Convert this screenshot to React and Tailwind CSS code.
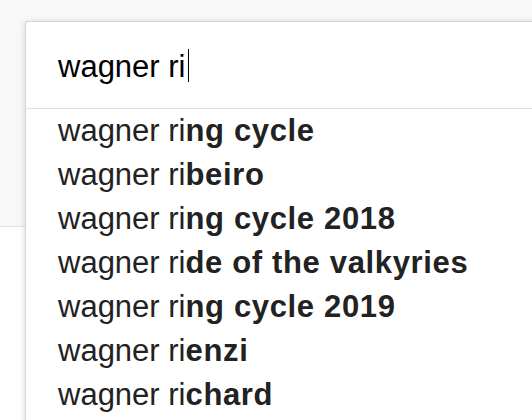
const suggestions = [
  'ng cycle',
  'beiro',
  'ng cycle 2018',
  'de of the valkyries',
  'ng cycle 2019',
  'enzi',
  'chard',
]

export default function App() {
  return (
    <div className="relative h-[420px] w-[532px] overflow-hidden bg-white font-['Liberation_Sans',Arial,sans-serif]">
      <div className="h-[227px] border-b border-[#e3e3e3] bg-[#f8f8f8]" />

      <div className="absolute left-[25px] top-[21px] h-[420px] w-[540px] rounded-tl-[3px] border-l border-t border-[#d6d6d6] bg-white shadow-[0_1px_6px_rgba(0,0,0,0.16)]">
        <div className="h-[86px] pl-[32px] pt-[23px] text-[31px] leading-[44px] text-black">
          wagner ri
          <span className="ml-[2px] inline-block h-[33px] w-px bg-black align-[-5px]" />
        </div>
        <div className="h-px bg-[#e0e0e0]" />
        <ul className="pl-[32px] text-[31px] leading-[44px] text-[#222]">
          {suggestions.map((rest) => (
            <li key={rest} className="whitespace-nowrap">
              wagner ri<b className="font-bold tracking-[0.65px]">{rest}</b>
            </li>
          ))}
        </ul>
      </div>
    </div>
  )
}
